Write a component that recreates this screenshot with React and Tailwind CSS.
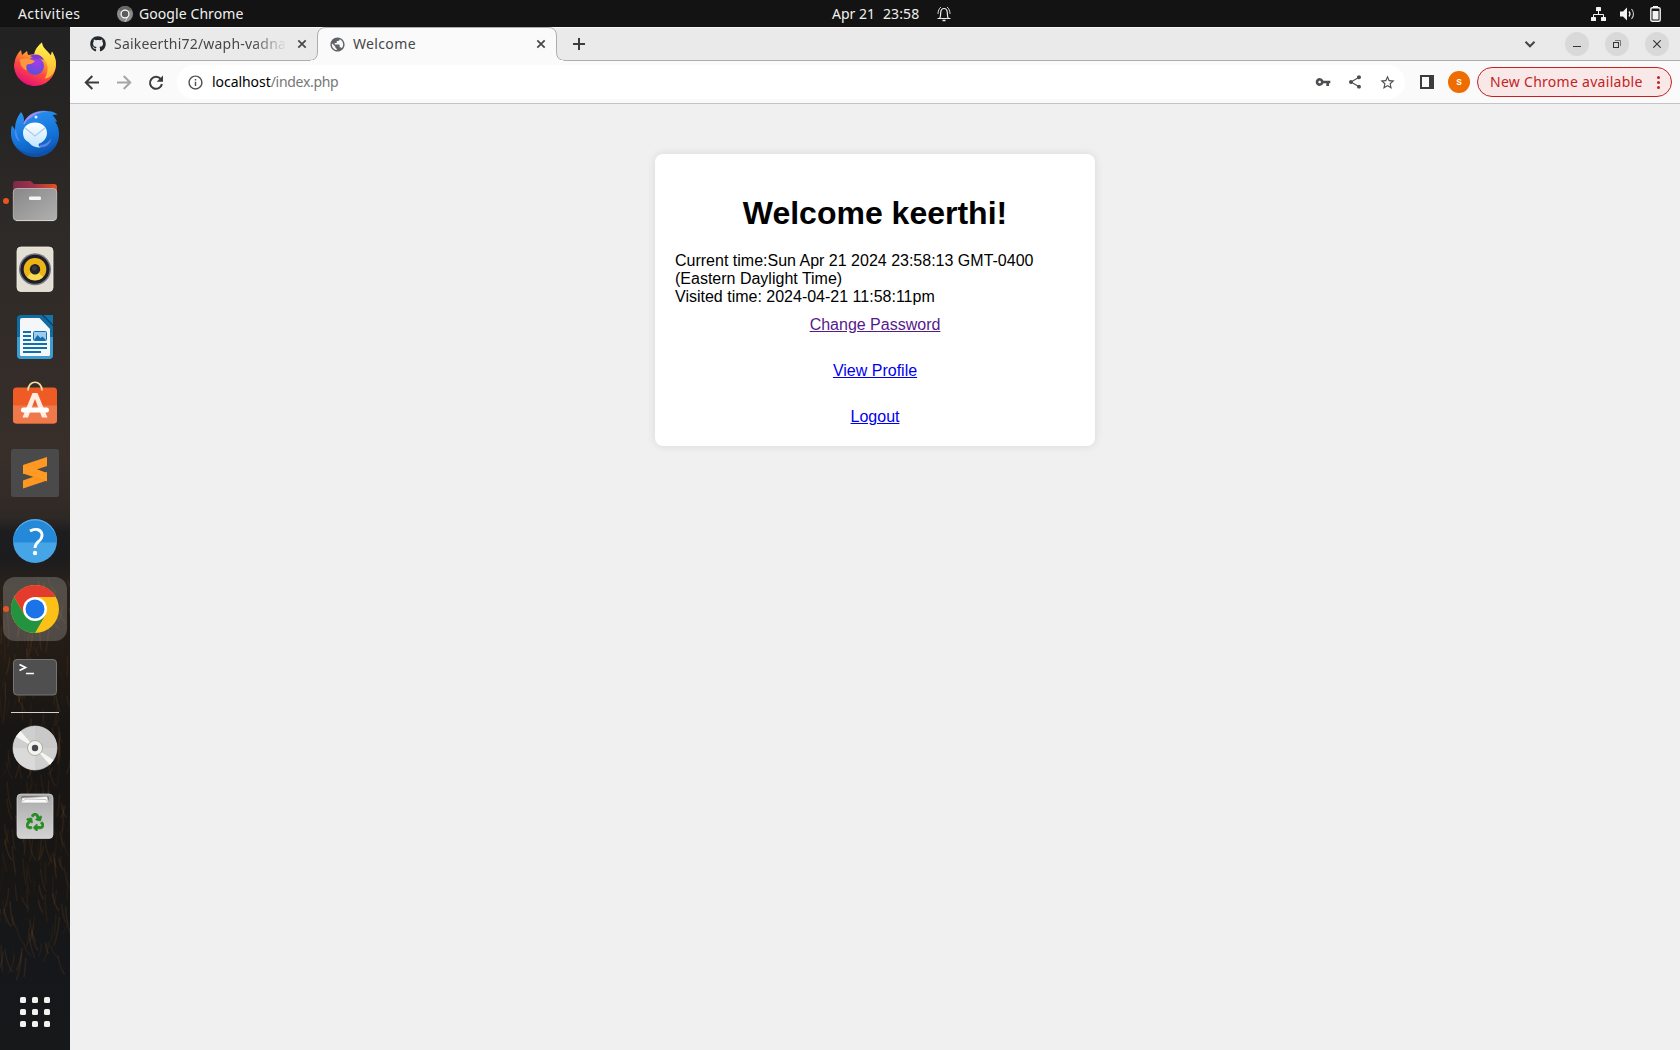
import React from "react";
import { MdInfoOutline, MdVpnKey, MdShare, MdStarBorder, MdPublic } from "react-icons/md";
import { FaGithub, FaRecycle } from "react-icons/fa";

function Firefox() {
  return (
    <svg viewBox="0 0 64 64" className="size-16">
      <defs>
        <linearGradient id="fx" x1="0.8" y1="0" x2="0.3" y2="1">
          <stop offset="0" stopColor="#ffe847" />
          <stop offset="0.35" stopColor="#ffa930" />
          <stop offset="0.65" stopColor="#ff4a3f" />
          <stop offset="1" stopColor="#e40b7d" />
        </linearGradient>
        <radialGradient id="fxg" cx="0.6" cy="0.3" r="0.8">
          <stop offset="0" stopColor="#a43be8" />
          <stop offset="1" stopColor="#4d55d6" />
        </radialGradient>
        <linearGradient id="fxt" x1="0.5" y1="0" x2="0.5" y2="1">
          <stop offset="0" stopColor="#fff44f" />
          <stop offset="1" stopColor="#ffb02e" />
        </linearGradient>
      </defs>
      <path d="M12 27C13 23 15 20 18 17l1 5 5-4 1 4 7-1C33 16 35 13 39 9.500c0 5 5 8 9 13l1-4c3 5 4.500 9 4 14-1 12-10 20.500-21 20.500S11 44 11 32z" fill="url(#fx)" />
      <path d="M31 22C32 16 35 13 39 9.500c0 5 5 8 9 13l1-4c3 6 4.500 10 3.500 16-1 6-6 11-11 11 4-5 5-15-2-21z" fill="url(#fxt)" />
      <circle cx="32" cy="33" r="9" fill="url(#fxg)" />
      <path d="M17 26.500c5-2 10-1 15 1.500-2 3-5 3-8 3.500-1 2-1 4 0 6-5-2-7-6-7-11z" fill="#ff9640" />
      <path d="M27 23c6-3 12-1 14 4-3-1-6-2-9-1z" fill="#7f39d0" />
    </svg>
  );
}

function Thunderbird() {
  return (
    <svg viewBox="0 0 64 64" className="size-16">
      <defs>
        <linearGradient id="tb" x1="0.3" y1="0" x2="0.6" y2="1">
          <stop offset="0" stopColor="#2d92f0" />
          <stop offset="0.6" stopColor="#1373d9" />
          <stop offset="1" stopColor="#0d52ad" />
        </linearGradient>
        <linearGradient id="tbw" x1="0" y1="0" x2="0" y2="1">
          <stop offset="0" stopColor="#ffffff" />
          <stop offset="1" stopColor="#bfe3ff" />
        </linearGradient>
      </defs>
      <path d="M9 24.500l3 4c0-7 2-12 6-17.500 3 4 4 8 2 12 4-9 12-14 23-13 5 0 9 1 11.500 3.500l-5 .5c2 2 4 5 4.500 7l-2-.5c3 4 4 8 4 13 0 13-11 22.500-23 22.500C19 56 8 44 8 33c0-3 0-6 1-8.500z" fill="url(#tb)" />
      <path d="M20 23C25 13 33 9.500 45 10.500 38 11 33 12.500 29 16l-3 2c-2 1-3 2.500-4 5z" fill="#a98af0" />
      <path d="M13 28c0 5 2 9 4 13-5-4-6-9-4-13z" fill="#5c8df0" />
      <path d="M32 21.500c7 0 12 4.500 12 10.500S39 42 36 42.500c-1 2 0 3 2 4-6 0-10-2-12-5-4-2-6-5-6-9.500 0-6 5-10.500 12-10.500z" fill="url(#tbw)" />
      <path d="M22 27l10 8 10-8" fill="none" stroke="#a5cbed" strokeWidth="1.100" />
      <path d="M37 44c5 0 9-3 11-7 0 6-5 10-11 9z" fill="#5983e8" />
      <circle cx="33" cy="16" r="1.500" fill="#dff1ff" />
      <path d="M13 45c9 10 29 12 41-5-4 11-13 16-22 16-8 0-15-4-19-11z" fill="#0d4fa6" opacity=".6" />
    </svg>
  );
}

function Files() {
  return (
    <svg viewBox="0 0 64 64" className="size-16">
      <defs>
        <linearGradient id="fo" x1="0" y1="0" x2="1" y2="0">
          <stop offset="0" stopColor="#7b2a4c" />
          <stop offset="0.5" stopColor="#a33347" />
          <stop offset="1" stopColor="#e9521f" />
        </linearGradient>
        <linearGradient id="fb" x1="0" y1="0" x2="1" y2="1">
          <stop offset="0" stopColor="#888" />
          <stop offset="1" stopColor="#b0b0b0" />
        </linearGradient>
      </defs>
      <path d="M10 15a3 3 0 0 1 3-3h14.500l3.500 3h20a3 3 0 0 1 3 3v12H10z" fill="url(#fo)" />
      <rect x="10.300" y="19.500" width="43.400" height="32" rx="3.500" fill="url(#fb)" stroke="#c2c2c2" strokeWidth=".8" />
      <path d="M13 51.600h38" stroke="#dedede" strokeWidth=".8" />
      <rect x="26" y="27.500" width="12" height="3.500" rx="1.200" fill="#f6f6f6" />
    </svg>
  );
}

function Rhythmbox() {
  return (
    <svg viewBox="0 0 64 64" className="size-16">
      <rect x="14" y="10" width="36" height="44.500" rx="4" fill="#e3dfd4" stroke="#f2efe6" strokeWidth=".8" />
      <circle cx="32" cy="32.300" r="16" fill="#77777c" />
      <circle cx="32" cy="32.300" r="14.500" fill="#1d1d2c" />
      <circle cx="32" cy="32.300" r="11.300" fill="#eab515" />
      <path d="M24 40a11.300 11.300 0 0 0 16 0l-8-8z" fill="#f8d955" />
      <circle cx="32" cy="32.300" r="5.200" fill="#23232a" />
      <circle cx="31.500" cy="31.300" r="2.500" fill="#3a3a3e" />
    </svg>
  );
}

function Writer() {
  return (
    <svg viewBox="0 0 64 64" className="size-16">
      <path d="M18 10h21l11 11v29a4 4 0 0 1-4 4H18a4 4 0 0 1-4-4V14a4 4 0 0 1 4-4z" fill="#0f6da5" />
      <path d="M14 32h36v18a4 4 0 0 1-4 4H18a4 4 0 0 1-4-4z" fill="#3b9dd2" />
      <path d="M39 10l11 11V10z" fill="#0b3f66" />
      <path d="M40.500 10H50v9.500z" fill="#1374ae" />
      <path d="M19 13h17.500L47 24v25.500a1.500 1.500 0 0 1-1.500 1.500H18.500a1.500 1.500 0 0 1-1.500-1.500V15a2 2 0 0 1 2-2z" fill="#f4f6f8" />
      <path d="M20 27h8M20 31h8M20 35h8M20 39h24M20 43h24M20 47h18" stroke="#0f6fb0" strokeWidth="2" />
      <rect x="30.500" y="26.500" width="13" height="9" rx="1" fill="#9bcbee" stroke="#0f6fb0" />
      <path d="M31 35l3.500-5 3 3 2-1.500 3.500 3.500z" fill="#0f6fb0" />
    </svg>
  );
}

function Software() {
  return (
    <svg viewBox="0 0 64 64" className="size-16">
      <rect x="10" y="14.500" width="44" height="36" rx="3.500" fill="#ee5b25" />
      <path d="M10 32.500h44V47a3.500 3.500 0 0 1-3.500 3.500h-37A3.500 3.500 0 0 1 10 47z" fill="#f0794c" />
      <path d="M25 17.500C25 6.500 39 6.500 39 17.500" fill="none" stroke="#f7dfa5" strokeWidth="1.700" />
      <path d="M29.500 20h5L44.500 44.500H39L32 26 25 44.500h-5.500z" fill="#ffece2" />
      <rect x="18" y="34.500" width="28" height="5" rx="2.500" fill="#fff" />
    </svg>
  );
}

function Sublime() {
  return (
    <svg viewBox="0 0 64 64" className="size-16">
      <rect x="8" y="8" width="48" height="48" rx="2.500" fill="#4a4a4a" />
      <path d="M20 39.500L44 31v8.500L20 47.500z" fill="#ff9820" />
      <path d="M20 24v8.500l24 8V32.500L34 28.500z" fill="#f28c12" />
      <path d="M20 24l24-8v9L20 33z" fill="#ff9820" />
      <path d="M20 24v8l24 8v-8l-11-4z" fill="#ff9a24" />
    </svg>
  );
}

function Help() {
  return (
    <svg viewBox="0 0 64 64" className="size-16">
      <circle cx="32" cy="32" r="22" fill="#45a5e6" />
      <path d="M10 33.500a22 22 0 1 1 44 0z" fill="#2589d9" />
      <path d="M13 22a21.500 21.500 0 0 1 38 0" fill="none" stroke="#58ace9" strokeWidth=".8" />
      <path d="M27 22c2.500-1.500 5-2 7-1.500 5 .8 6.500 6 3.500 10-2 2.500-5.500 3.500-5.500 8.500" fill="none" stroke="#fff" strokeWidth="2.800" />
      <circle cx="32" cy="44" r="2.200" fill="#fff" />
    </svg>
  );
}

function Chrome() {
  return (
    <svg viewBox="0 0 64 64" className="size-16">
      <circle cx="32" cy="32" r="24" fill="#fbc116" />
      <path d="M32 32L11.200 20A24 24 0 0 1 52.800 20H32z" fill="#e33b2e" />
      <path d="M11.200 20A24 24 0 0 0 32 56L42.400 38 32 32 21.600 38z" fill="#24933f" />
      <path d="M11.200 20L21.600 38 32 32V20z" fill="#e33b2e" />
      <circle cx="32" cy="32" r="12" fill="#fff" />
      <circle cx="32" cy="32" r="9.500" fill="#1a73e8" />
    </svg>
  );
}

function Terminal() {
  return (
    <svg viewBox="0 0 64 64" className="size-16">
      <rect x="10.500" y="14.500" width="43" height="35.500" rx="3.500" fill="#4f4f4f" stroke="#757575" />
      <path d="M16.500 19.500l6 3-6 3M23 28.500h8" fill="none" stroke="#fff" strokeWidth="1.700" />
    </svg>
  );
}

function Disc() {
  return (
    <svg viewBox="0 0 64 64" className="size-16">
      <circle cx="32" cy="32" r="22" fill="#cfcfcf" stroke="#e2e2e2" strokeWidth=".6" />
      <path d="M32 32V10a22 22 0 0 1 22 22z" fill="#c9c9c9" />
      <path d="M32 32v22a22 22 0 0 1-22-22z" fill="#dadada" />
      <path d="M32 32L13 20.500l4.500-5.500zM32 32l18.500 12-3.500 5z" fill="#f6f6f4" />
      <circle cx="32" cy="32" r="7.500" fill="#f3f3f1" stroke="#b2ac99" strokeWidth="1" />
      <circle cx="32" cy="32" r="3.200" fill="#48484c" />
    </svg>
  );
}

function Trash() {
  return (
    <div className="relative flex size-16">
      <svg viewBox="0 0 64 64" className="size-16">
        <defs>
          <linearGradient id="tr" x1="0" y1="0" x2="0" y2="1">
            <stop offset="0" stopColor="#aaa" />
            <stop offset="1" stopColor="#d3d3d3" />
          </linearGradient>
        </defs>
        <rect x="14" y="10" width="36" height="44.500" rx="4" fill="url(#tr)" stroke="#dcdcdc" strokeWidth=".7" />
        <path d="M18 14a2 2 0 0 1 2-2h24a2 2 0 0 1 2 2v5H18z" fill="#777" />
        <path d="M19 14l25-1.500 2 6.500H18z" fill="#fafafa" stroke="#aaa" strokeWidth=".7" />
        <path d="M19 17.500l4-2.500 20 .5 2 3.500" fill="none" stroke="#aaa" strokeWidth=".7" />
      </svg>
      <FaRecycle className="absolute left-[23px] top-[29px] size-[18px] stroke-[#258b22] stroke-[22] text-[#258b22]" />
    </div>
  );
}

/* Faint grass blades over the lower half of the wallpaper. */
const noise = (n) => {
  const v = Math.sin(n * 127.1) * 43758.5453;
  return v - Math.floor(v);
};
const blades = Array.from({ length: 220 }, (_, i) => ({
  x: noise(i + 1) * 74 - 2,
  y: 575 + noise(i + 301) * 385,
  dx: noise(i + 601) * 14 - 6,
  h: 8 + noise(i + 901) * 20,
  o: 0.06 + noise(i + 1201) * 0.2,
}));

function Wallpaper() {
  return (
    <svg viewBox="0 27 70 1023" className="absolute inset-0 h-full w-full" preserveAspectRatio="none">
      {blades.map((b, i) => (
        <path
          key={i}
          d={`M${b.x} ${b.y}q${b.dx * 0.2} ${b.h * 0.6} ${b.dx} ${b.h}`}
          fill="none"
          stroke="#7a4b22"
          strokeWidth="1.500"
          opacity={b.o}
        />
      ))}
    </svg>
  );
}

function DockItem({ children, running, active }) {
  return (
    <div className="flex h-16 w-[70px] items-center">
      <div className={active ? "relative ml-[3px] size-16 rounded-[12px] bg-white/20" : "relative ml-[3px] size-16"}>
        {running && <span className="absolute top-[29px] left-0 size-[6px] rounded-full bg-[#e95420]" />}
        {children}
      </div>
    </div>
  );
}

function Dock() {
  return (
    <aside className="relative flex w-[70px] shrink-0 flex-col bg-[linear-gradient(to_bottom,#222222_0px,#272524_100px,#2f2b28_220px,#332c28_330px,#382f2b_430px,#2f2926_490px,#1d1d1f_505px,#1c1c1e_530px,#29221b_560px,#221b15_630px,#181614_700px,#181614_850px,#15171a_930px,#17181a_1023px)]">
      <Wallpaper />
      <div className="relative flex flex-1 flex-col gap-1 pt-[6px]">
        <DockItem><Firefox /></DockItem>
        <DockItem><Thunderbird /></DockItem>
        <DockItem running><Files /></DockItem>
        <DockItem><Rhythmbox /></DockItem>
        <DockItem><Writer /></DockItem>
        <DockItem><Software /></DockItem>
        <DockItem><Sublime /></DockItem>
        <DockItem><Help /></DockItem>
        <DockItem active running><Chrome /></DockItem>
        <DockItem><Terminal /></DockItem>
        <div className="-mt-[1px] -mb-[1px] ml-[11px] h-px w-12 bg-[#d6d2cf]" />
        <DockItem><Disc /></DockItem>
        <DockItem><Trash /></DockItem>
      </div>
      <div className="relative mb-[23px] ml-5 grid w-[30px] grid-cols-3 gap-[6px]">
        {Array.from({ length: 9 }, (_, i) => (
          <span key={i} className="size-[6px] rounded-[1.500px] bg-[#f2f2f0]" />
        ))}
      </div>
    </aside>
  );
}

function TopBar() {
  return (
    <header className="flex h-[27px] shrink-0 items-center bg-[#131313] text-[14px] leading-[27px] text-[#f0f0f0]">
      <div className="flex w-[832px] items-center pl-[18px]">
        <span className="w-[99px] tracking-[0.4px]">Activities</span>
        <svg viewBox="0 0 16 16" className="mr-[6px] size-4">
          <circle cx="8" cy="8" r="8" fill="#8b8b8b" />
          <path d="M8 8L1.500 3.500A8 8 0 0 1 15 4.500H8z" fill="#666" />
          <circle cx="8" cy="8" r="3.900" fill="#5c5c5c" stroke="#fff" strokeWidth="1.200" />
          <path d="M11.500 9.500L8 16" stroke="#e6e6e6" strokeWidth=".8" />
        </svg>
        <span className="tracking-[0.08px]">Google Chrome</span>
      </div>
      <span className="w-[51px]">Apr 21</span>
      <span className="w-[54px] tracking-[0.1px]">23:58</span>
      <svg viewBox="0 0 14 16" className="h-4 w-[14px]" fill="none" stroke="#ececec">
        <path d="M.5 12.500h13M2.500 12.500c1.300-1.500 1-3 1.200-6 .2-2.500 1.500-4 3.300-4s3.100 1.500 3.300 4c.2 3-.1 4.500 1.200 6" strokeWidth="1.200" />
        <path d="M1 8c0-3 1-5.500 3-7M13 8c0-3-1-5.500-3-7" strokeWidth=".9" />
        <path d="M5.500 14.500h3" strokeWidth="1.500" />
      </svg>
      <div className="ml-auto flex items-center pr-[19px]">
        <svg viewBox="0 0 15 14" className="mr-[14px] h-[14px] w-[15px]" fill="#f2f2f2">
          <rect x="5" y="0" width="5" height="4" rx=".6" />
          <rect x="0" y="10" width="5" height="4" rx=".6" />
          <rect x="10" y="10" width="5" height="4" rx=".6" />
          <path d="M2.500 10V7.500h10V10M7.500 4v3.500" fill="none" stroke="#f2f2f2" />
        </svg>
        <svg viewBox="0 0 16 14" className="mr-[14px] h-[14px] w-4" fill="#f2f2f2">
          <path d="M0 4.500h3L7 .5v13l-4-4H0z" />
          <path d="M9 4.500q2 2.500 0 5" fill="none" stroke="#f2f2f2" strokeWidth="1.300" />
          <path d="M11.500 2q4 5 0 10" fill="none" stroke="#c4c4c4" strokeWidth="1.200" />
        </svg>
        <svg viewBox="0 0 11 16" className="h-4 w-[11px]">
          <rect x="3" y="0" width="5" height="2" fill="#f2f2f2" />
          <rect x=".8" y="1.800" width="9.400" height="13.400" rx="1.500" fill="none" stroke="#f2f2f2" strokeWidth="1.400" />
          <rect x="2.500" y="5" width="6" height="8.500" fill="#f2f2f2" />
        </svg>
      </div>
    </header>
  );
}

function TabClose() {
  return (
    <svg viewBox="0 0 14 14" className="size-[14px] shrink-0" fill="none" stroke="#45474a" strokeWidth="1.700">
      <path d="M3.300 3.300l7.400 7.400M10.700 3.300l-7.400 7.400" />
    </svg>
  );
}

function WindowButton({ children }) {
  return <span className="flex size-6 items-center justify-center rounded-full bg-[#d9d9d9] text-[#333]">{children}</span>;
}

function TabStrip() {
  return (
    <div className="flex h-[34px] items-center border-t border-b border-t-[#f6f6f6] border-b-[#adadad] bg-[#eaeaea] text-[14px] leading-[20px] text-[#45474a]">
      <div className="flex w-[247px] items-center pl-5">
        <FaGithub className="mr-2 size-4 shrink-0 text-[#24292f]" />
        <span className="mr-[8px] w-[173px] overflow-hidden whitespace-nowrap tracking-[0.2px] [mask-image:linear-gradient(to_right,black_80%,transparent)]">
          Saikeerthi72/waph-vadnala
        </span>
        <TabClose />
      </div>
      <div className="relative flex h-[34px] w-[240px] items-center">
        <svg viewBox="0 0 262 34" className="absolute top-0 -left-[11px] h-[34px] w-[262px]">
          <path d="M0 33.500H3Q11.500 33.500 11.500 25V9Q11.500 .5 20 .5H242Q250.500 .5 250.500 9V25Q250.500 33.500 259 33.500H262" fill="#fafafa" stroke="#adadad" />
          <path d="M4.500 33.500h253" stroke="#fafafa" strokeWidth="1.200" />
        </svg>
        <div className="relative flex w-full items-center pl-[12px]">
          <MdPublic className="mr-[7px] size-[17px] text-[#5f6368]" />
          <span className="w-[181px] tracking-[0.35px]">Welcome</span>
          <TabClose />
        </div>
      </div>
      <svg viewBox="0 0 20 20" className="ml-[12px] size-5" stroke="#3c3c3c" strokeWidth="2">
        <path d="M4 10h12M10 4v12" />
      </svg>
      <div className="ml-auto flex items-center pr-[11px]">
        <svg viewBox="0 0 20 20" className="mr-[25px] size-5" fill="none" stroke="#444" strokeWidth="2">
          <path d="M5.500 7.800l4.500 4.500 4.500-4.500" />
        </svg>
        <div className="flex gap-4">
          <WindowButton>
            <span className="mt-1 h-px w-2 bg-[#333]" />
          </WindowButton>
          <WindowButton>
            <svg viewBox="0 0 8 8" className="size-2" fill="none">
              <rect x=".5" y="2.500" width="5" height="5" stroke="#333" />
              <path d="M2 .5h5.500V6" stroke="#777" />
            </svg>
          </WindowButton>
          <WindowButton>
            <svg viewBox="0 0 8 8" className="size-2" stroke="#333" strokeWidth="1.100">
              <path d="M.3.3l7.400 7.400M7.700.3L.3 7.700" />
            </svg>
          </WindowButton>
        </div>
      </div>
    </div>
  );
}

function Toolbar() {
  return (
    <div className="flex h-[43px] items-center border-b border-[#c4c4c4] bg-[#fafafa] pl-[11px] pr-2 text-[14px] leading-5">
      <svg viewBox="0 0 21 21" className="mr-[11px] size-[21px]" fill="none" stroke="#3c3c3c" strokeWidth="2">
        <path d="M18 10.500H5.500M11.300 4L4.800 10.500l6.500 6.500" />
      </svg>
      <svg viewBox="0 0 21 21" className="mr-[11px] size-[21px]" fill="none" stroke="#a6a6a6" strokeWidth="2">
        <path d="M4 10.500h12.500M10.700 4l6.500 6.500-6.500 6.500" />
      </svg>
      <svg viewBox="0 0 21 21" className="mr-[11px] size-[21px]" fill="none" stroke="#3c3c3c" strokeWidth="2">
        <path d="M15.800 7.200A6 6 0 1 0 16.900 12" />
        <path d="M18 3.500v6.300h-6.300z" fill="#3c3c3c" stroke="none" />
      </svg>
      <div className="flex h-[34px] flex-1 items-center rounded-full bg-white pl-[10px] text-[#4c4e51]">
        <MdInfoOutline className="mr-[8px] size-[17px]" />
        <span className="tracking-[-0.05px] text-black">localhost</span>
        <span className="tracking-[-0.3px] text-[#777]">/index.php</span>
        <MdVpnKey className="mr-[16px] ml-auto size-4" />
        <MdShare className="mr-[16px] size-4" />
        <MdStarBorder className="mr-[9px] size-[17px]" />
      </div>
      <svg viewBox="0 0 14 14" className="mr-[14px] ml-[15px] size-[14px]">
        <path d="M0 0h14v14H0zM2 2v10h7V2z" fill="#3c3c3c" fillRule="evenodd" />
      </svg>
      <span className="flex size-[22px] items-center justify-center rounded-full bg-[#ef6c00] font-['Roboto'] text-[11px] font-medium text-white">s</span>
      <div className="ml-[7px] flex h-[30px] w-[195px] items-center justify-between rounded-full border border-[#c5221f] bg-[#f8e8e8] pr-[11px] pl-3 text-[#c5221f]">
        <span className="whitespace-nowrap tracking-[0.28px]">New Chrome available</span>
        <span className="flex flex-col gap-[2px]">
          <i className="size-[3px] rounded-full bg-[#c5221f]" />
          <i className="size-[3px] rounded-full bg-[#c5221f]" />
          <i className="size-[3px] rounded-full bg-[#c5221f]" />
        </span>
      </div>
    </div>
  );
}

function Page() {
  return (
    <main className="flex flex-1 items-start justify-center bg-[#f0f0f0] pt-[50px] font-['Liberation_Sans',Arial,sans-serif] text-[16px] leading-[18px] text-black">
      <section className="h-[292px] w-[440px] rounded-[8px] bg-white p-5 shadow-[0_0_10px_rgba(0,0,0,0.1)]">
        <h1 className="mt-[21px] text-center text-[32px] leading-[36px] font-bold">Welcome keerthi!</h1>
        <div className="mt-[21px]">
          <p>Current time:Sun Apr 21 2024 23:58:13 GMT-0400 (Eastern Daylight Time)</p>
          <p>Visited time: 2024-04-21 11:58:11pm</p>
        </div>
        <nav className="mt-[10px] flex flex-col items-center gap-7">
          <a className="text-[#551a8b] underline">Change Password</a>
          <a className="text-[#0000ee] underline">View Profile</a>
          <a className="text-[#0000ee] underline">Logout</a>
        </nav>
      </section>
    </main>
  );
}

export default function App() {
  return (
    <div className="flex h-[1050px] w-[1680px] flex-col overflow-hidden font-['Noto_Sans','Open_Sans',sans-serif]">
      <TopBar />
      <div className="flex min-h-0 flex-1">
        <Dock />
        <div className="flex min-w-0 flex-1 flex-col">
          <TabStrip />
          <Toolbar />
          <Page />
        </div>
      </div>
    </div>
  );
}
